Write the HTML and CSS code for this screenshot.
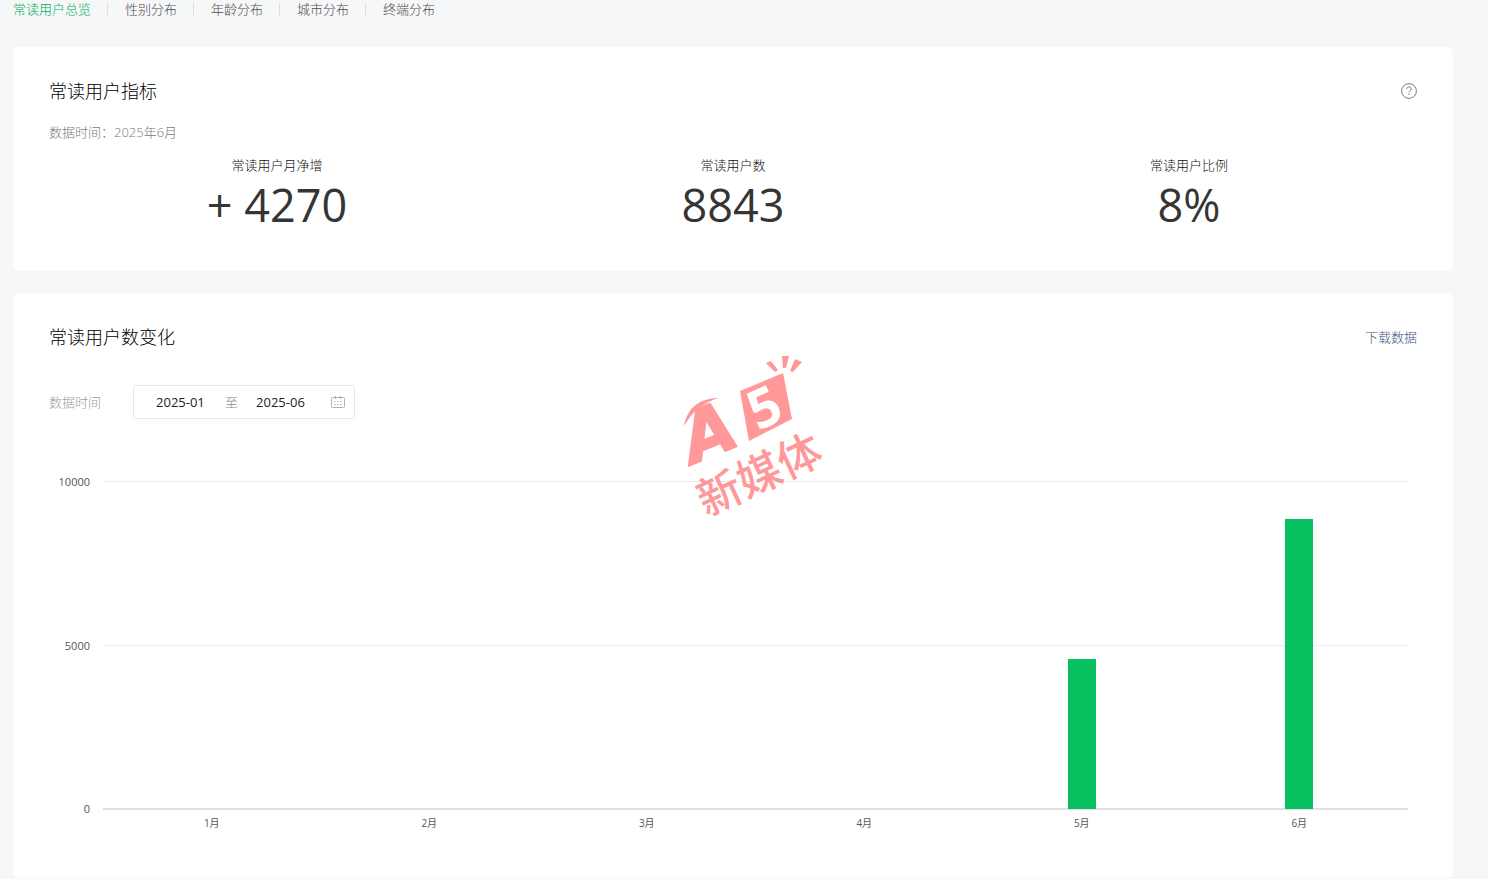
FILE: index.html
```html
<!DOCTYPE html>
<html lang="zh-CN">
<head>
  <meta charset="UTF-8" />
  <meta name="viewport" content="width=device-width, initial-scale=1.0">
  <title>常读用户总览</title>
  <link rel="stylesheet" href="styles.css">
</head>
<body>

  <nav class="tabs">
    <a href="#" class="tab active">常读用户总览</a>
    <a href="#" class="tab">性别分布</a>
    <a href="#" class="tab">年龄分布</a>
    <a href="#" class="tab">城市分布</a>
    <a href="#" class="tab">终端分布</a>
  </nav>

  <main>
    <section class="card">
      <div class="card-head">
        <h2>常读用户指标</h2>
        <button type="button" class="help-btn" aria-label="说明">
          <svg width="16" height="16" viewBox="0 0 16 16" fill="none" stroke="#7d7d7d">
            <circle cx="8" cy="8" r="7.4" />
            <path d="M5.7 6.2C5.7 4.7 6.700 3.900 8 3.900s2.300.9 2.300 2.100c0 1.600-2.300 1.800-2.300 3.500" />
            <path d="M8 10.700v1.300" />
          </svg>
        </button>
      </div>
      <p class="data-time">数据时间：2025年6月</p>
      <dl class="metrics">
        <div class="metric"><dt>常读用户月净增</dt><dd>+ 4270</dd></div>
        <div class="metric"><dt>常读用户数</dt><dd>8843</dd></div>
        <div class="metric"><dt>常读用户比例</dt><dd>8%</dd></div>
      </dl>
    </section>

    <section class="card">
      <div class="card-head">
        <h2>常读用户数变化</h2>
        <a href="#" class="download">下载数据</a>
      </div>

      <div class="filter">
        <label for="start">数据时间</label>
        <div class="date-range">
          <input type="text" id="start" value="2025-01">
          <span class="to">至</span>
          <input type="text" id="end" value="2025-06" aria-label="结束时间">
          <svg class="calendar" width="14" height="12" viewBox="0 0 14 12" fill="none" stroke="#b2b2b2">
            <rect x=".5" y="1.5" width="13" height="10" rx="1" />
            <path d="M4.5 0v3M9.5 0v3" />
            <path d="M3 5.5h8M3 8.5h8" stroke-dasharray="1.5 1.5" />
          </svg>
        </div>
      </div>

      <div class="chart">
        <div class="y-axis"><span>10000</span><span>5000</span><span>0</span></div>
        <div class="plot">
          <div class="lines"><i></i><i></i><i></i></div>
          <div class="bars">
            <div class="bar" style="height:0%"></div>
            <div class="bar" style="height:0%"></div>
            <div class="bar" style="height:0%"></div>
            <div class="bar" style="height:0%"></div>
            <div class="bar" style="height:45.73%"></div>
            <div class="bar" style="height:88.43%"></div>
          </div>
        </div>
        <div class="x-axis">
          <span>1月</span><span>2月</span><span>3月</span><span>4月</span><span>5月</span><span>6月</span>
        </div>
      </div>

      <svg class="watermark" width="170" height="180" viewBox="0 0 170 180" fill="#ff9999">
        <path d="M14 81C17 65 27 53 49 53C34 57 23 66 14 81Z" />
        <path d="M70 46L113 28L122 74L79 96Z" />
        <path d="M96 18l5-2 7 9-3 2zM112 11h7l-3 12h-3zM125 14l7 3-9 10-3-1z" />
        <text class="mark-a" transform="translate(23 119) rotate(-22)">A</text>
        <text class="mark-5" transform="translate(88 86) rotate(-24)">5</text>
        <text class="mark-name" transform="translate(96 144) rotate(-25)">新媒体</text>
      </svg>
    </section>
  </main>

</body>
</html>
```
FILE: styles.css
```css
*, *::before, *::after {
  box-sizing: border-box;
}

body {
  margin: 0;
  padding: 0 35px 0 13px;
  background: #f6f7f9;
  color: #353535;
  font-family: "Open Sans", "Noto Sans CJK SC", sans-serif;
  font-size: 13px;
  line-height: 18px;
}

a {
  text-decoration: none;
}

h2, p, dl, dd {
  margin: 0;
}

.tabs {
  display: flex;
  height: 47px;
  font-weight: 300;
}

.tab {
  display: flex;
  height: 18px;
  color: #4c4c4c;
}

.tab.active {
  color: #00ad50;
}

.tab + .tab::before {
  content: "";
  width: 1px;
  height: 12px;
  margin: 3px 17px 0 16px;
  background: #dcdde0;
}

.card {
  position: relative;
  margin-bottom: 22px;
  padding: 31px 36px 35px;
  background: #fff;
  border-radius: 6px;
}

.card:last-child {
  margin-bottom: 0;
  padding-bottom: 47px;
}

.card-head {
  display: flex;
  justify-content: space-between;
  align-items: center;
  height: 26px;
}

h2 {
  font-size: 18px;
  font-weight: 300;
  line-height: 26px;
  color: #000;
}

.help-btn {
  display: flex;
  padding: 0;
  border: none;
  background: none;
  cursor: pointer;
}

.data-time {
  margin-top: 19px;
  color: #7a7a7a;
  font-weight: 300;
}

.metrics {
  display: grid;
  grid-template-columns: repeat(3, 1fr);
  margin-top: 15px;
  text-align: center;
}

.metric dt {
  color: #111;
  font-weight: 300;
}

.metric dd {
  font-size: 45px;
  line-height: 62px;
  color: #353535;
}

.download {
  color: #3d5285;
  font-weight: 300;
}

.filter {
  display: flex;
  align-items: center;
  gap: 32px;
  margin-top: 35px;
}

.filter label {
  color: #9a9a9a;
  font-weight: 300;
}

.date-range {
  display: flex;
  align-items: center;
  width: 222px;
  height: 34px;
  padding: 0 9px 0 22px;
  border: 1px solid #e4e8eb;
  border-radius: 4px;
}

.date-range input {
  width: 52px;
  padding: 0;
  border: none;
  background: none;
  outline: none;
  color: #222;
  font: inherit;
}

.to {
  margin: 0 18px 0 17px;
  color: #888;
  font-weight: 300;
}

.calendar {
  margin-left: auto;
}

.chart {
  display: grid;
  grid-template-columns: 41px 1fr;
  grid-template-rows: 329px auto;
  column-gap: 13px;
  margin: 62px 9px 0 0;
  color: #555;
}

.y-axis {
  display: flex;
  flex-direction: column;
  justify-content: space-between;
  margin: -7px 0;
  font-size: 11px;
  line-height: 16px;
  text-align: right;
}

.plot {
  display: grid;
}

.lines, .bars {
  grid-area: 1 / 1;
  display: flex;
}

.lines {
  flex-direction: column;
  justify-content: space-between;
}

.lines i {
  height: 1px;
  background: #ebedf0;
}

.lines i:last-child {
  height: 2px;
  background: #e0e2ea;
}

.bars {
  justify-content: space-around;
  align-items: flex-end;
  margin-bottom: 1px;
}

.bar {
  width: 28px;
  background: #07c160;
}

.x-axis {
  grid-column: 2;
  display: grid;
  grid-template-columns: repeat(6, 1fr);
  padding-top: 5px;
  font-size: 10px;
  line-height: 16px;
  text-align: center;
}

/* brand mark laid over the chart */
.watermark {
  position: absolute;
  top: 52px;
  left: 45.6%;
  overflow: visible;
  pointer-events: none;
}

.mark-a {
  font-family: "DejaVu Sans", sans-serif;
  font-size: 68px;
  font-weight: 700;
  font-style: italic;
  stroke: #ff9999;
  stroke-width: 2px;
}

.mark-5 {
  fill: #fff;
  font-size: 54px;
  font-weight: 700;
}

.mark-name {
  font-size: 44px;
  font-weight: 500;
  text-anchor: middle;
}
```
